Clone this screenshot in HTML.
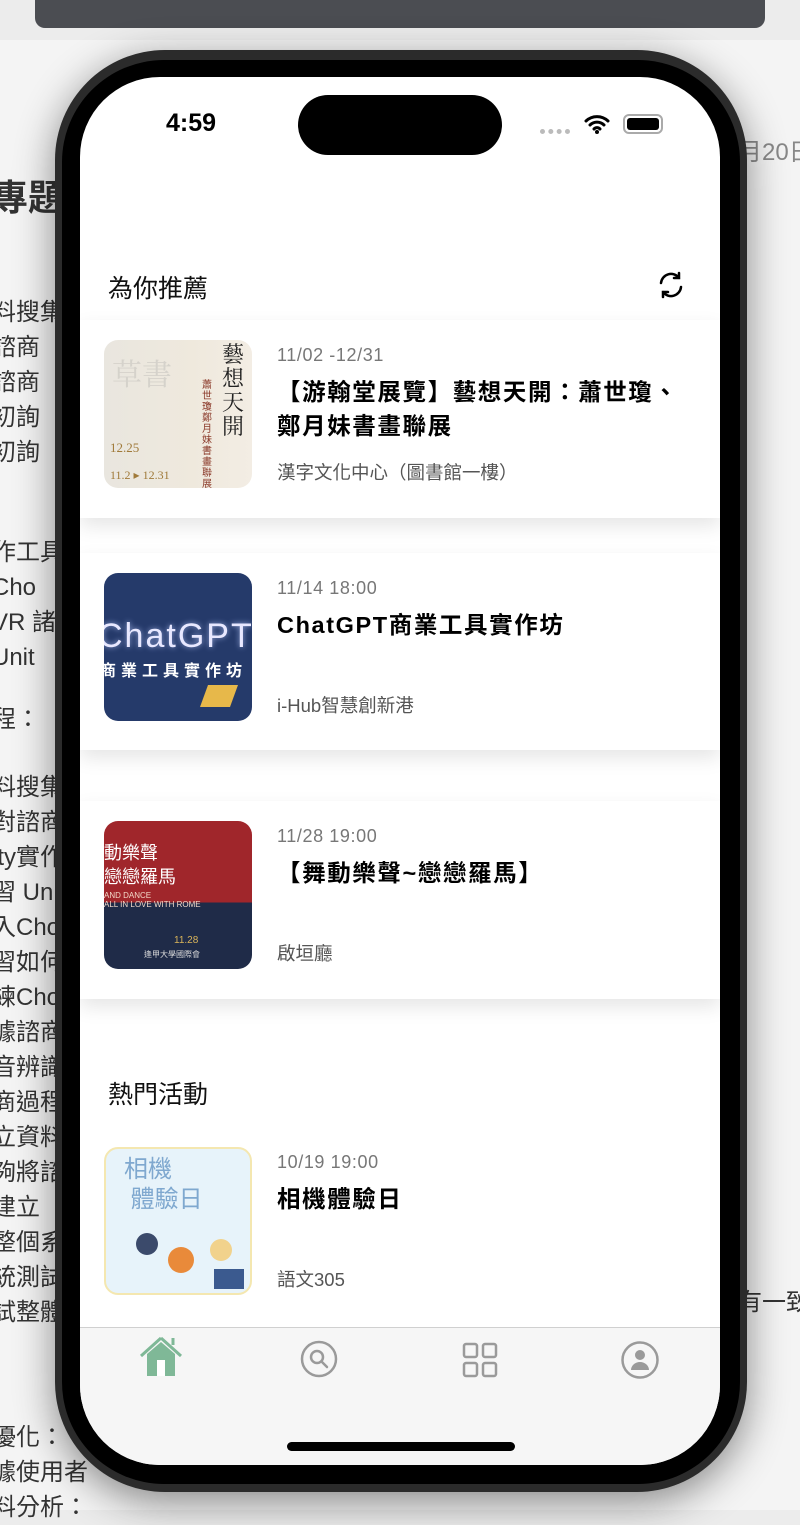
<!DOCTYPE html>
<html><head><meta charset="utf-8"><style>
*{margin:0;padding:0;box-sizing:border-box}
body{width:800px;height:1510px;overflow:hidden;background:#ececec;position:relative;font-family:"Liberation Sans","Noto Sans CJK TC",sans-serif}
.bgdoc{position:absolute;left:0;top:40px;width:800px;height:1470px;background:#f4f4f4}
.bgt{position:absolute;left:-8px;font-size:24px;color:#333;line-height:35px;white-space:nowrap;font-family:"Liberation Sans","Noto Sans CJK TC",sans-serif}
.topbar{position:absolute;left:35px;top:-10px;width:730px;height:38px;background:#4b4d52;border-radius:0 0 10px 10px}
.phone{position:absolute;left:55px;top:50px;width:692px;height:1442px;border-radius:110px;background:#2b2b2b;box-shadow:0 10px 40px rgba(0,0,0,.45)}
.bez{position:absolute;left:62px;top:60px;width:678px;height:1424px;border-radius:102px;background:#000}
.screen{position:absolute;left:80px;top:77px;width:640px;height:1388px;border-radius:80px;background:#fff;overflow:hidden}
.island{position:absolute;left:218px;top:18px;width:204px;height:60px;border-radius:30px;background:#000}
.time{position:absolute;left:86px;top:32px;font-size:25px;font-weight:bold;color:#000}
.h{position:absolute;left:28px;font-size:25px;color:#111}
.card{position:absolute;left:0;width:640px;height:198px;background:#fff;box-shadow:0 8px 18px rgba(0,0,0,.10)}
.img{position:absolute;left:24px;top:20px;width:148px;height:148px;border-radius:14px;overflow:hidden}
.date{position:absolute;left:197px;top:25px;font-size:18px;color:#777;letter-spacing:.6px}
.title{position:absolute;left:197px;top:55px;width:418px;font-size:23.5px;font-weight:bold;color:#000;line-height:34px;letter-spacing:1.6px}
.loc{position:absolute;left:197px;top:139px;font-size:18.5px;color:#555}
.tab{position:absolute;left:0;top:1250px;width:640px;height:200px;background:#f6f6f6;border-top:1px solid #d0d0d0}
</style></head><body>
<div class="bgdoc"></div>
<div class="bgt" style="top:180px;font-size:36px;font-weight:bold">專題</div>
<div class="bgt" style="top:295px">料搜集<br>諮商<br>諮商<br>初詢<br>初詢</div>
<div class="bgt" style="top:535px">作工具<br>Cho<br>VR 諸<br>Unit</div>
<div class="bgt" style="top:702px">程：</div>
<div class="bgt" style="top:770px">料搜集<br>對諮商<br>ity實作<br>習 Un<br>入Cho<br>習如何<br>練Cho<br>據諮商<br>音辨識<br>商過程<br>立資料<br>夠將諮<br>建立<br>整個系<br>統測試<br>試整體</div>
<div class="bgt" style="top:1420px">優化：<br>據使用者<br>料分析：</div>
<div class="bgt" style="left:738px;top:135px;color:#888">月20日</div>
<div class="bgt" style="left:738px;top:1285px">有一致</div>
<div class="topbar"></div>
<div class="phone"></div>
<div class="bez"></div>
<div class="screen">
  <div class="island"></div>
  <div class="time">4:59</div>
  <div style="position:absolute;left:460px;top:52px;width:30px;height:5px;border-top:5px dotted #bbb"></div>
  <svg style="position:absolute;left:504px;top:36px" width="26" height="22" viewBox="0 0 26 22"><path d="M2 8a16 16 0 0 1 22 0M6 12a10 10 0 0 1 14 0M10 16a4 4 0 0 1 6 0" stroke="#000" stroke-width="3" fill="none" stroke-linecap="round"/><circle cx="13" cy="19" r="2" fill="#000"/></svg>
  <div style="position:absolute;left:543px;top:37px;width:40px;height:20px;border:2px solid #aaa;border-radius:6px;padding:2px"><div style="width:100%;height:100%;background:#000;border-radius:3px"></div></div>
  <div class="h" style="top:192px">為你推薦</div>
  <svg style="position:absolute;left:576px;top:193px" width="30" height="30" viewBox="0 0 30 30" fill="none" stroke="#000" stroke-width="2.5" stroke-linecap="round"><path d="M5 13a10 10 0 0 1 18-5M23 3v5h-5M25 17a10 10 0 0 1-18 5M7 27v-5h5"/></svg>

  <div class="card" style="top:243px">
    <div class="img" style="background:linear-gradient(90deg,#e9e6df,#efe9dd 60%,#f3ede4)">
      <div style="position:absolute;left:8px;top:10px;font-size:30px;color:#d5d2cb;font-family:'Noto Serif CJK SC',serif">草書</div>
      <div style="position:absolute;left:118px;top:2px;width:24px;font-size:22px;line-height:24px;color:#222;font-family:'Noto Serif CJK SC',serif">藝想天開</div>
      <div style="position:absolute;left:98px;top:40px;width:12px;font-size:10px;line-height:11px;color:#8b3a2a">蕭世瓊鄭月妹書畫聯展</div>
      <div style="position:absolute;left:6px;top:100px;font-size:13px;color:#a07a3a;font-family:'Liberation Serif',serif">12.25</div>
      <div style="position:absolute;left:6px;top:128px;font-size:12px;color:#a07a3a;font-family:'Liberation Serif',serif">11.2 ▸ 12.31</div>
    </div>
    <div class="date">11/02 -12/31</div>
    <div class="title">【游翰堂展覽】藝想天開：蕭世瓊、<br>鄭月妹書畫聯展</div>
    <div class="loc">漢字文化中心（圖書館一樓）</div>
  </div>

  <div class="card" style="top:476px;height:197px">
    <div class="img" style="background:#253a6a">
      <div style="position:absolute;left:-6px;top:44px;font-size:34px;color:#e8e8ff;letter-spacing:2px;text-shadow:0 0 6px #9ad">ChatGPT</div>
      <div style="position:absolute;left:-4px;top:84px;font-size:16px;font-weight:bold;color:#fff;letter-spacing:5px;white-space:nowrap">商業工具實作坊</div>
      <div style="position:absolute;left:100px;top:112px;width:30px;height:22px;background:#e7b84a;transform:skewX(-20deg)"></div>
    </div>
    <div class="date">11/14 18:00</div>
    <div class="title">ChatGPT商業工具實作坊</div>
    <div class="loc">i-Hub智慧創新港</div>
  </div>

  <div class="card" style="top:724px">
    <div class="img" style="background:linear-gradient(#a0262b 0 55%,#1f2b48 55%)">
      <div style="position:absolute;left:0;top:20px;font-size:18px;color:#fff;line-height:24px">動樂聲<br>戀戀羅馬</div>
      <div style="position:absolute;left:0;top:70px;font-size:8px;color:#f2d8c8">AND DANCE<br>ALL IN LOVE WITH ROME</div>
      <div style="position:absolute;left:70px;top:114px;font-size:10px;color:#d9b45a">11.28</div>
      <div style="position:absolute;left:40px;top:128px;font-size:8px;color:#ddd">逢甲大學國際會</div>
    </div>
    <div class="date">11/28 19:00</div>
    <div class="title">【舞動樂聲~戀戀羅馬】</div>
    <div class="loc">啟垣廳</div>
  </div>

  <div class="h" style="top:998px">熱門活動</div>
  <div style="position:absolute;left:0;top:1050px;width:640px;height:200px">
    <div class="img" style="background:#e7f3fa;border:2px solid #f4e7b0">
      <div style="position:absolute;left:18px;top:6px;font-size:24px;color:#7fa8cf;line-height:30px">相機<br>&nbsp;體驗日</div>
      <div style="position:absolute;left:30px;top:84px;width:22px;height:22px;border-radius:50%;background:#3b4a6b"></div>
      <div style="position:absolute;left:62px;top:98px;width:26px;height:26px;border-radius:50%;background:#e98a3a"></div>
      <div style="position:absolute;left:104px;top:90px;width:22px;height:22px;border-radius:50%;background:#f1d28c"></div>
      <div style="position:absolute;left:108px;top:120px;width:30px;height:20px;background:#3b5a8f"></div>
    </div>
    <div class="date">10/19 19:00</div>
    <div class="title">相機體驗日</div>
    <div class="loc">語文305</div>
  </div>

  <div class="tab">
    <svg style="position:absolute;left:58px;top:8px" width="46" height="42" viewBox="0 0 46 42"><path d="M23 2 L3 20 M23 2 L43 20 M35 9 V2" stroke="#7fb897" stroke-width="3" fill="none"/><path d="M9 18 L23 6 L37 18 V40 H9Z" fill="#7fb897"/><rect x="19" y="24" width="8" height="16" fill="#fff"/></svg>
    <svg style="position:absolute;left:220px;top:12px" width="38" height="38" viewBox="0 0 38 38" fill="none" stroke="#9a9a9a" stroke-width="2.5"><circle cx="19" cy="19" r="17"/><circle cx="17" cy="17" r="6"/><path d="M21.5 21.5 L27 27" stroke-linecap="round"/></svg>
    <svg style="position:absolute;left:382px;top:14px" width="36" height="36" viewBox="0 0 36 36" fill="none" stroke="#9a9a9a" stroke-width="2.5"><rect x="2" y="2" width="13" height="13" rx="2"/><rect x="21" y="2" width="13" height="13" rx="2"/><rect x="2" y="21" width="13" height="13" rx="2"/><rect x="21" y="21" width="13" height="13" rx="2"/></svg>
    <svg style="position:absolute;left:540px;top:12px" width="40" height="40" viewBox="0 0 40 40"><circle cx="20" cy="20" r="17.5" fill="none" stroke="#9a9a9a" stroke-width="2.5"/><circle cx="20" cy="15" r="5" fill="#9a9a9a"/><path d="M11 30 a9 8 0 0 1 18 0Z" fill="#9a9a9a"/></svg>
  </div>
  <div style="position:absolute;left:207px;top:1365px;width:228px;height:9px;border-radius:5px;background:#000"></div>
</div>
</body></html>
